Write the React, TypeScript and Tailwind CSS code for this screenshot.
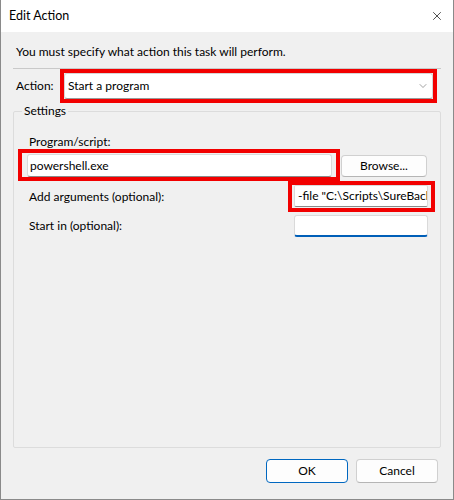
import { ChevronDown, X } from "lucide-react";

const FONT = "font-['Segoe_UI','Lato','Liberation_Sans',sans-serif]";

export default function App() {
  return (
    <div
      className={`flex h-[500px] w-[454px] flex-col border border-t-0 border-[#8a8a8a] bg-[#f0f0f0] text-[12px] leading-[16px] text-black ${FONT}`}
    >
      {/* Title bar */}
      <div className="flex h-[32px] items-center justify-between bg-white pl-[8px] pr-[9px]">
        <span className="text-[12.5px]">Edit Action</span>
        <X size={14} strokeWidth={1.3} className="text-[#1a1a1a]" />
      </div>

      <div className="flex flex-1 flex-col px-[12px]">
        <div className="mt-[12px] pl-[3px]">You must specify what action this task will perform.</div>

        <div className="mt-[8px] h-px bg-[#c9c9c9]" />

        {/* Action row */}
        <div className="flex items-center pr-[4px]">
          <span className="w-[47px] pl-[3px]">Action:</span>
          <div className="flex-1 border-4 border-[#f20000]">
            <div className="flex h-[26px] items-center justify-between rounded-[3px] border border-[#d6d6d6] border-b-[#9a9a9a] bg-white pl-[3px] pr-[3px]">
              <span>Start a program</span>
              <ChevronDown size={12} strokeWidth={1.1} className="text-[#555]" />
            </div>
          </div>
        </div>

        {/* Settings group */}
        <fieldset className="flex-1 rounded-[2px] border border-[#dcdcdc] pl-[1px]">
          <legend className="ml-[7px] px-[2px]">Settings</legend>

          <div className="mt-[15px] pl-[14px]">Program/script:</div>

          <div className="-mt-px flex items-center">
            <div className="ml-[3px] w-[322px] border-4 border-[#f20000] pl-[5px] pr-[4px] pt-px">
              <div className="flex h-[23px] items-center rounded-[3px] border border-[#dadada] border-b-[#8a8a8a] bg-white pl-[2px]">
                powershell.exe
              </div>
            </div>
            <button className="ml-px mt-px h-[22px] w-[86px] rounded-[4px] border border-[#d0d0d0] border-b-[#b5b5b5] bg-[#fdfdfd] pt-px">
              Browse...
            </button>
          </div>

          <div className="flex items-center">
            <span className="w-[273px] pl-[14px]">Add arguments (optional):</span>
            <div className="w-[147px] border-4 border-[#f20000] pb-px pl-[2px] pr-[3px]">
              <div className="flex h-[22px] items-center overflow-hidden whitespace-nowrap rounded-[2px] border border-[#dadada] border-b-[#8a8a8a] bg-white pl-[3px]">
                -file "C:\Scripts\SureBackup.ps1"
              </div>
            </div>
          </div>

          <div className="mt-[3px] flex items-center">
            <span className="w-[279px] pl-[14px]">Start in (optional):</span>
            <div className="h-[22px] w-[134px] rounded-[3px] border border-[#dadada] border-b-2 border-b-[#005fb8] bg-white" />
          </div>
        </fieldset>

        {/* Footer buttons */}
        <div className="flex justify-end gap-[8px] pb-[16px] pr-[3px] pt-[11px]">
          <button className="h-[24px] w-[82px] rounded-[4px] border border-[#0067c0] bg-[#fdfdfd]">OK</button>
          <button className="h-[24px] w-[82px] rounded-[4px] border border-[#d0d0d0] border-b-[#b5b5b5] bg-[#fdfdfd]">
            Cancel
          </button>
        </div>
      </div>
    </div>
  );
}
